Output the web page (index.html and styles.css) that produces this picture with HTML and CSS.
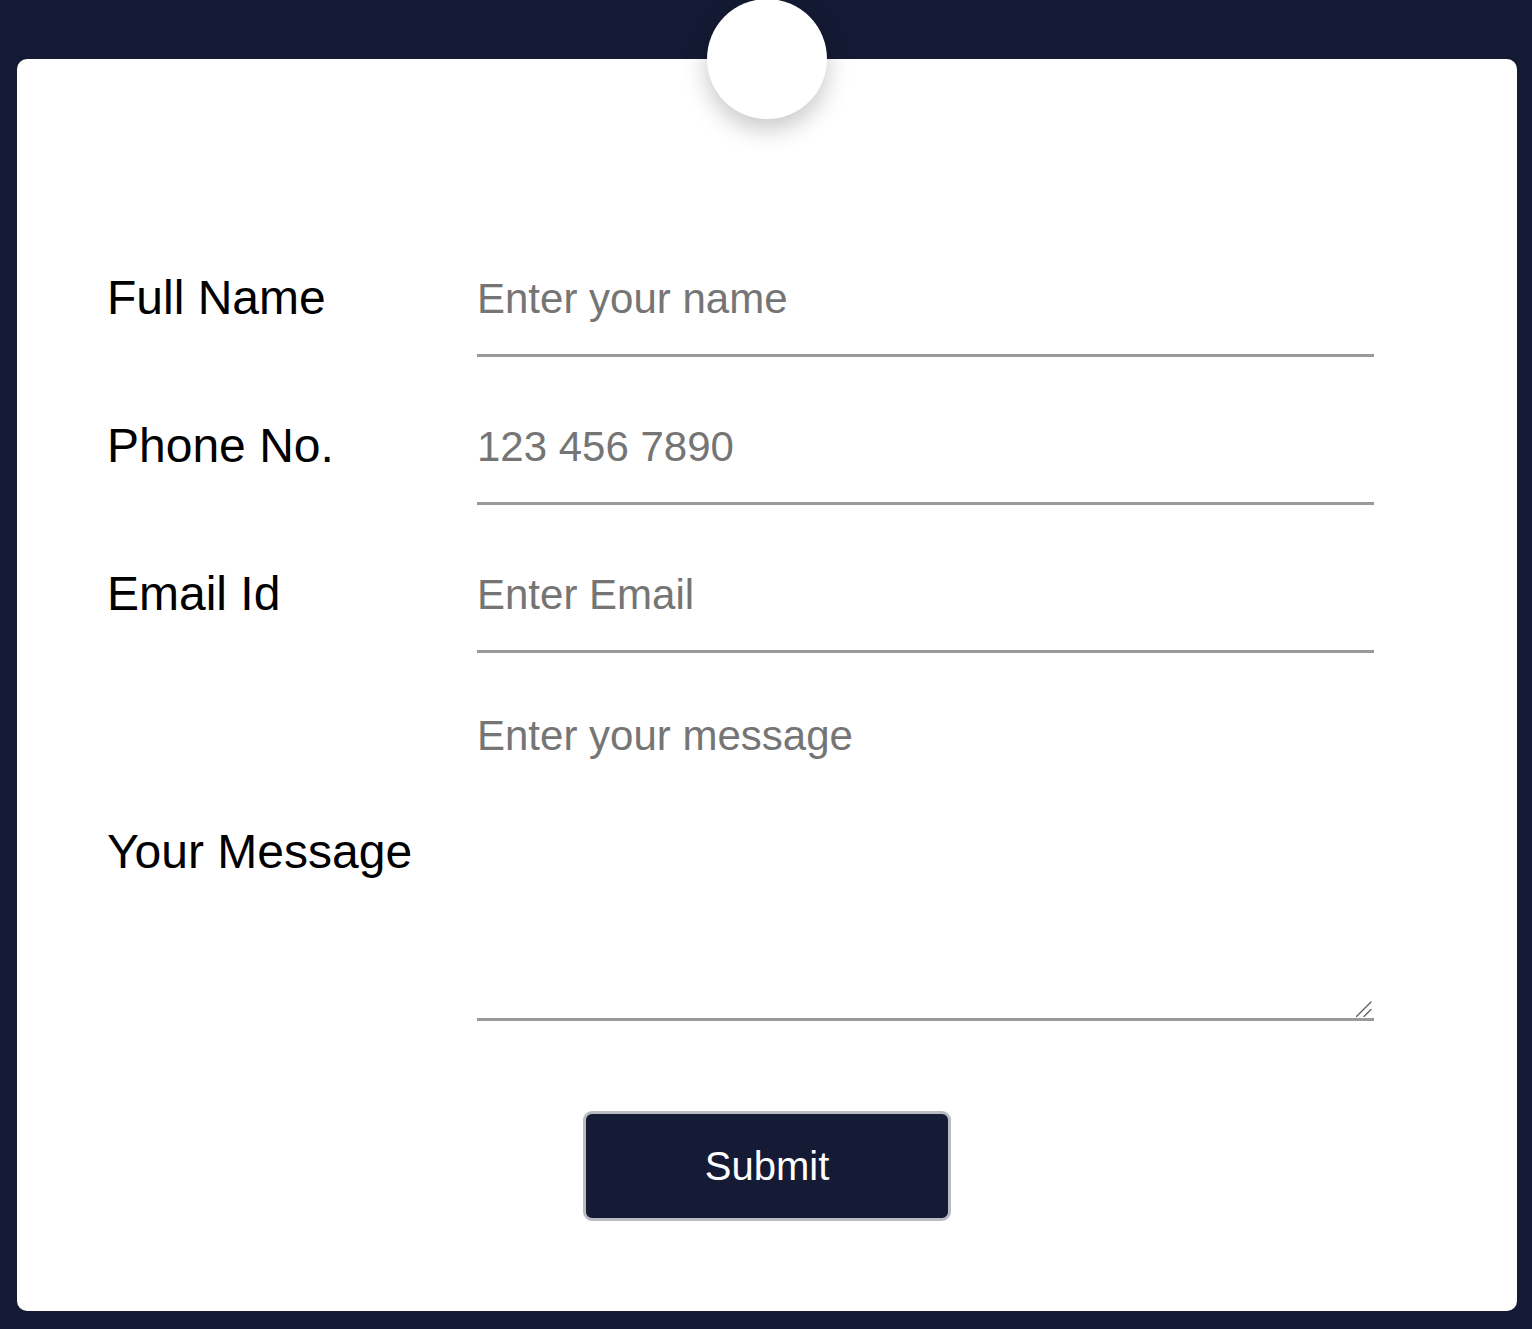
FILE: index.html
```html
<!DOCTYPE html>
<html lang="en">
<head>
<meta charset="utf-8">
<title>Contact Form</title>
<link rel="stylesheet" href="styles.css">
</head>
<body>
<main class="card">
  <div class="avatar"></div>
  <form class="form">
    <div class="row">
      <label class="label" for="name">Full Name</label>
      <input class="field" id="name" type="text" placeholder="Enter your name">
    </div>
    <div class="row">
      <label class="label" for="phone">Phone No.</label>
      <input class="field" id="phone" type="tel" placeholder="123 456 7890">
    </div>
    <div class="row">
      <label class="label" for="email">Email Id</label>
      <input class="field" id="email" type="email" placeholder="Enter Email">
    </div>
    <div class="row row-message">
      <label class="label label-message" for="msg">Your Message</label>
      <div class="area-wrap">
        <textarea class="field area" id="msg" placeholder="Enter your message"></textarea>
        <svg class="grip" width="16" height="16" viewBox="0 0 16 16" aria-hidden="true">
          <line x1="0.5" y1="15.5" x2="15" y2="1" stroke="#5a5a5a" stroke-width="1.3" stroke-linecap="round"/>
          <line x1="8" y1="15.5" x2="15" y2="8.5" stroke="#5a5a5a" stroke-width="1.3" stroke-linecap="round"/>
        </svg>
      </div>
    </div>
    <div class="actions">
      <button class="submit" type="button">Submit</button>
    </div>
  </form>
</main>
</body>
</html>
```
FILE: styles.css
```css
html, body {
  margin: 0;
  padding: 0;
}
body {
  background: #141a33;
  padding: 59px 15px 18px 17px;
  font-family: "Liberation Sans", Arial, sans-serif;
  overflow: hidden;
}
.card {
  position: relative;
  box-sizing: border-box;
  width: 1500px;
  background: #ffffff;
  border-radius: 10px;
  padding: 215px 143px 90px 90px;
}
.avatar {
  position: absolute;
  top: -60px;
  left: 50%;
  margin-left: -60px;
  width: 120px;
  height: 120px;
  border-radius: 50%;
  background: #ffffff;
  box-shadow: 0 10px 24px rgba(0, 0, 0, 0.22);
}
.form {
  display: flex;
  flex-direction: column;
}
.row {
  display: grid;
  grid-template-columns: 370px 897px;
  align-items: start;
  margin-bottom: 65px;
}
.row-message {
  margin-top: -6px;
  margin-bottom: 90px;
  align-items: center;
}
.label {
  font-size: 48px;
  line-height: 44px;
  padding-top: 2px;
  color: #000000;
}
.label-message {
  padding-top: 0;
  padding-bottom: 30px;
}
.field {
  box-sizing: content-box;
  width: 897px;
  margin: 0;
  padding: 1px 0 31px 0;
  border: none;
  border-bottom: 3px solid #9a9a9a;
  border-radius: 0;
  outline: none;
  background: transparent;
  font-family: "Liberation Sans", Arial, sans-serif;
  font-size: 42px;
  line-height: 48px;
  height: 48px;
  color: #222222;
}
.field::placeholder {
  color: #757575;
}
.area-wrap {
  position: relative;
  width: 897px;
}
.area {
  height: 306px;
  padding: 0;
  resize: none;
  display: block;
}
.grip {
  position: absolute;
  right: 2px;
  bottom: 4px;
}
.actions {
  display: flex;
  justify-content: center;
  padding-left: 53px;
}
.submit {
  box-sizing: border-box;
  width: 368px;
  height: 110px;
  background: #151a35;
  color: #ffffff;
  border: 3px solid #b8bbc3;
  border-radius: 9px;
  font-family: "Liberation Sans", Arial, sans-serif;
  font-size: 40px;
  cursor: pointer;
}
```
